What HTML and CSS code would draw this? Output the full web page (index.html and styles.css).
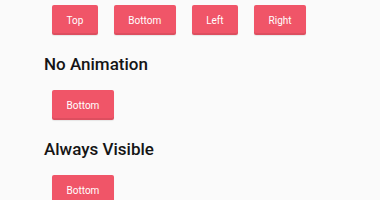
FILE: index.html
```html
<!DOCTYPE html>
<html>
<head>
<meta charset="utf-8">
<link rel="stylesheet" href="styles.css">
</head>
<body>
<main class="page">
  <section class="demo">
    <h2 class="demo-title">Any Direction</h2>
    <div class="row">
      <button class="btn">Top</button>
      <button class="btn">Bottom</button>
      <button class="btn">Left</button>
      <button class="btn">Right</button>
    </div>
  </section>
  <section class="demo">
    <h2 class="demo-title">No Animation</h2>
    <div class="row">
      <button class="btn">Bottom</button>
    </div>
  </section>
  <section class="demo">
    <h2 class="demo-title">Always Visible</h2>
    <div class="row">
      <button class="btn">Bottom</button>
    </div>
  </section>
</main>
</body>
</html>
```
FILE: styles.css
```css
html, body {
  margin: 0;
  padding: 0;
  background: #fafafa;
  overflow: hidden;
}
body {
  font-family: Roboto, "Liberation Sans", sans-serif;
  color: #1a1a1a;
}
.page {
  padding-left: 44px;
  margin-top: -33px;
}
.demo + .demo {
  margin-top: 17px;
}
.demo-title {
  margin: 0;
  font-size: 17px;
  line-height: 24px;
  font-weight: 500;
  color: #151515;
}
.row {
  display: flex;
  gap: 16px;
  margin-top: 14px;
  padding-left: 8px;
}
.btn {
  height: 30px;
  padding: 0 14.5px;
  border: none;
  border-radius: 2px;
  background: #f05568;
  color: #fff;
  font-family: Roboto, "Liberation Sans", sans-serif;
  font-size: 10px;
  font-weight: 400;
  box-shadow: inset 0 -2px 0 rgba(0, 0, 0, 0.08), 0 1px 1px rgba(0, 0, 0, 0.08);
}
```
